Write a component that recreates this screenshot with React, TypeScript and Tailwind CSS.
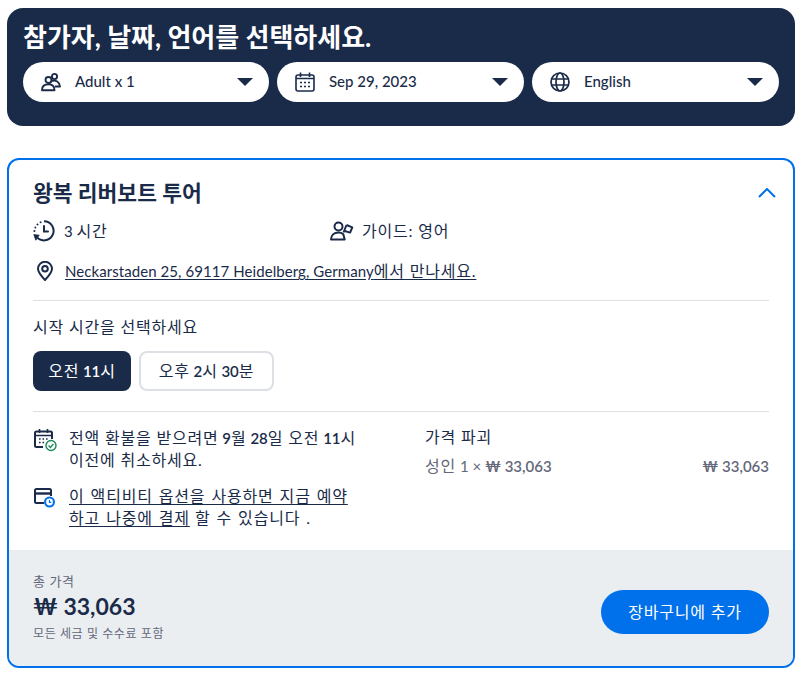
import type { ReactNode } from 'react';

const FONT = 'font-["Lato","Noto_Sans_CJK_KR",sans-serif]';

// El coreano va más ancho que el latín en la captura
function Ko({ children }: { children: ReactNode }) {
  return <span className="text-[16px] font-normal tracking-[0.8px]">{children}</span>;
}

function Caret() {
  return (
    <svg width="16" height="8" viewBox="0 0 16 8" className="shrink-0">
      <path d="M0 0h16L8 8z" fill="#1a2b49" />
    </svg>
  );
}

function PeopleIcon() {
  return (
    <svg width="20" height="20" viewBox="0 0 20 20" fill="none" stroke="#1a2b49" strokeWidth="1.9">
      <circle cx="7.5" cy="8" r="3" />
      <circle cx="13.5" cy="4.5" r="2.6" />
      <path d="M1 18.2c0-3.8 2.6-6 6.5-6s6 2.2 6 6z" strokeLinejoin="round" />
      <path d="M11 9c3.6-1.2 7.6.6 8 5.5h-5" strokeLinejoin="round" />
    </svg>
  );
}

function CalendarIcon() {
  return (
    <svg width="20" height="20" viewBox="0 0 20 20" fill="none" stroke="#1a2b49" strokeWidth="1.6">
      <rect x="1" y="3" width="18" height="16" rx="2" />
      <path d="M1 6.5h18M5.5 0.5v4.5M14.5 0.5v4.5" />
      <path d="M5 10.5h2M9 10.5h2M13 10.5h2M5 14.5h2M9 14.5h2M13 14.5h2" strokeWidth="1.5" />
    </svg>
  );
}

function GlobeIcon() {
  return (
    <svg width="20" height="20" viewBox="0 0 20 20" fill="none" stroke="#1a2b49" strokeWidth="1.7">
      <circle cx="10" cy="10" r="9" />
      <ellipse cx="10" cy="10" rx="4" ry="9" />
      <path d="M1.6 7h16.8M1.6 13h16.8" />
    </svg>
  );
}

function HistoryIcon() {
  return (
    <svg width="22" height="22" viewBox="0 0 22 22" fill="none" stroke="#1a2b49" strokeWidth="2">
      <path d="M11 1.2a9.6 9.6 0 1 1-7.6 15.5" />
      <path d="M11 6v5.6h4" strokeLinecap="round" />
      <path d="M0.8 14.6l5.4.6-3.4 5z" fill="#1a2b49" strokeWidth="0.8" strokeLinejoin="round" />
      <path d="M7.5 2.2l.2.1M4.4 4.4l.2.1M2.3 7.4l.1.2M1.3 11h.2" strokeWidth="1.8" strokeLinecap="round" />
    </svg>
  );
}

function GuideIcon() {
  return (
    <svg width="24" height="20" viewBox="0 0 24 20" fill="none" stroke="#1a2b49" strokeWidth="2">
      <circle cx="8.5" cy="5.5" r="4" />
      <path d="M1 18.6c0-4.4 3-7 7.5-7 2.2 0 3.6.6 4.8 1.6l1.4 5.4z" strokeLinejoin="round" />
      <path d="M13.5 11.5l3-7.5" />
      <path d="M16.5 4l5.8 2.4-2.2 5.2-5.4-1.6" strokeLinejoin="round" />
    </svg>
  );
}

function PinIcon() {
  return (
    <svg width="16" height="20" viewBox="0 0 16 20" fill="none" stroke="#1a2b49" strokeWidth="2">
      <path d="M8 19C4 14.8 1 11.6 1 7.8a7 7 0 0 1 14 0C15 11.6 12 14.8 8 19z" strokeLinejoin="round" />
      <circle cx="8" cy="7.8" r="2.8" />
    </svg>
  );
}

function CalendarCheckIcon() {
  return (
    <svg width="24" height="24" viewBox="0 0 24 24" fill="none">
      <path d="M10 19H3.5A1.5 1.5 0 0 1 2 17.5V5a1.5 1.5 0 0 1 1.5-1.5h14A1.5 1.5 0 0 1 19 5v6" stroke="#1a2b49" strokeWidth="2" />
      <path d="M2 7.5h17M6.5 1v4M14.5 1v4" stroke="#1a2b49" strokeWidth="1.6" />
      <path d="M6 11h1.6M9.5 11h1.6M13 11h1.6M6 14.5h1.6M9.5 14.5h1.6" stroke="#1a2b49" strokeWidth="1.5" />
      <circle cx="18" cy="17.5" r="5" fill="#fff" stroke="#1b8a5a" strokeWidth="1.4" />
      <path d="M15.6 17.6l1.8 1.8 3-3.4" stroke="#1b8a5a" strokeWidth="1.4" />
    </svg>
  );
}

function CardClockIcon() {
  return (
    <svg width="24" height="24" viewBox="0 0 24 24" fill="none">
      <path d="M11 17H3.5A1.5 1.5 0 0 1 2 15.5v-11A1.5 1.5 0 0 1 3.5 3h13A1.5 1.5 0 0 1 18 4.5V10" stroke="#1a2b49" strokeWidth="2" />
      <path d="M2 7.5h16" stroke="#1a2b49" strokeWidth="2.4" />
      <circle cx="16.5" cy="16" r="5.5" fill="#0071eb" />
      <circle cx="16.5" cy="16" r="3.4" fill="#fff" />
      <path d="M16.5 14v2.3h1.8" stroke="#0071eb" strokeWidth="1.2" />
    </svg>
  );
}

function Pill({ icon, label }: { icon: ReactNode; label: string }) {
  return (
    <div className="flex h-10 items-center rounded-full bg-white pl-[18px] pr-4">
      {icon}
      <span className="ml-[14px] flex-1 pb-[2px] text-[15px] font-medium text-[#1a2b49]">{label}</span>
      <Caret />
    </div>
  );
}

export default function App() {
  return (
    <div className={`${FONT} min-h-[679px] bg-white pl-[7px] pr-2 pt-2 text-[#1a2b49]`}>
      {/* Filtros */}
      <div className="h-[118px] rounded-2xl bg-[#1a2b49] px-4 pt-3">
        <h2 className="h-[42px] text-[26px] leading-[34px] font-bold text-white">참가자, 날짜, 언어를 선택하세요.</h2>
        <div className="grid grid-cols-[246px_247px_247px] gap-2">
          <Pill icon={<PeopleIcon />} label="Adult x 1" />
          <Pill icon={<CalendarIcon />} label="Sep 29, 2023" />
          <Pill icon={<GlobeIcon />} label="English" />
        </div>
      </div>

      {/* Opción de tour */}
      <div className="mt-8 h-[510px] overflow-hidden rounded-xl border-2 border-[#0071eb]">
        <div className="h-[390px] px-6 pt-5">
          <div className="flex h-[26px] items-center justify-between">
            <h3 className="text-[21.5px] leading-[26px] font-bold">왕복 리버보트 투어</h3>
            <svg width="18" height="10" viewBox="0 0 18 10" fill="none" stroke="#0071eb" strokeWidth="2" className="mr-[-7px]">
              <path d="M1 9l8-8 8 8" />
            </svg>
          </div>

          <div className="mt-[13px] flex h-6 items-center text-[15px]">
            <div className="flex w-[297px] items-center">
              <HistoryIcon />
              <span className="ml-[9px]">3 <Ko>시간</Ko></span>
            </div>
            <div className="flex items-center">
              <GuideIcon />
              <span className="ml-[8px]"><Ko>가이드: 영어</Ko></span>
            </div>
          </div>

          <div className="mt-[16px] flex h-6 items-center text-[15px]">
            <span className="ml-[4px] flex"><PinIcon /></span>
            <a className="ml-3 tracking-[0.07px] underline underline-offset-2">Neckarstaden 25, 69117 Heidelberg, Germany<Ko>에서 만나세요.</Ko></a>
          </div>

          <div className="mt-[17px] border-t border-[#dcdfe4]" />

          <p className="mt-[16px] leading-5"><Ko>시작 시간을 선택하세요</Ko></p>

          <div className="mt-[14px] flex gap-2">
            <button className="h-10 w-[98px] rounded-lg bg-[#1a2b49] text-[15px] font-semibold text-white"><Ko>오전</Ko> 11<Ko>시</Ko></button>
            <button className="h-10 w-[135px] rounded-lg border-2 border-[#dcdfe4] bg-white text-[15px] font-semibold"><Ko>오후</Ko> 2<Ko>시</Ko> 30<Ko>분</Ko></button>
          </div>

          <div className="mt-[20px] border-t border-[#dcdfe4]" />

          <div className="mt-[15px] flex">
            <div className="w-[392px]">
              <div className="flex">
                <span className="mt-[1px] shrink-0"><CalendarCheckIcon /></span>
                <p className="ml-3 whitespace-nowrap text-[15px] leading-[22px]">
                  <Ko>전액 환불을 받으려면</Ko> <b className="font-semibold">9</b><Ko>월</Ko> <b className="font-semibold">28</b><Ko>일 오전</Ko> <b className="font-semibold">11</b><Ko>시</Ko>
                  <br />
                  <Ko>이전에 취소하세요.</Ko>
                </p>
              </div>
              <div className="mt-[14px] flex">
                <span className="mt-[1px] shrink-0"><CardClockIcon /></span>
                <p className="ml-3 whitespace-nowrap text-[15px] leading-[22px] [word-spacing:1.2px]">
                  <a className="underline underline-offset-2"><Ko>이 액티비티 옵션을 사용하면 지금 예약</Ko></a>
                  <br />
                  <a className="underline underline-offset-2"><Ko>하고 나중에 결제</Ko></a> <Ko>할 수 있습니다 .</Ko>
                </p>
              </div>
            </div>
            <div className="-mt-[1px] flex-1">
              <p className="leading-[22px]"><Ko>가격 파괴</Ko></p>
              <div className="mt-[7px] flex justify-between text-[15px] leading-[22px] font-semibold text-[#63687a]">
                <span><span className="font-normal"><Ko>성인</Ko> 1 ×</span> ₩ 33,063</span>
                <span>₩ 33,063</span>
              </div>
            </div>
          </div>
        </div>

        {/* Total */}
        <div className="flex h-[116px] items-center justify-between bg-[#ebeef1] px-6">
          <div className="pb-[2px]">
            <p className="text-[13px] leading-[18px] tracking-[0.6px] text-[#63687a]">총 가격</p>
            <p className="text-[23px] leading-8 font-bold">₩ 33,063</p>
            <p className="mt-[4px] text-xs leading-4 tracking-[0.6px] text-[#63687a]">모든 세금 및 수수료 포함</p>
          </div>
          <button className="mt-2 h-11 w-[168px] rounded-full bg-[#0071eb] text-white"><Ko>장바구니에 추가</Ko></button>
        </div>
      </div>
    </div>
  );
}
